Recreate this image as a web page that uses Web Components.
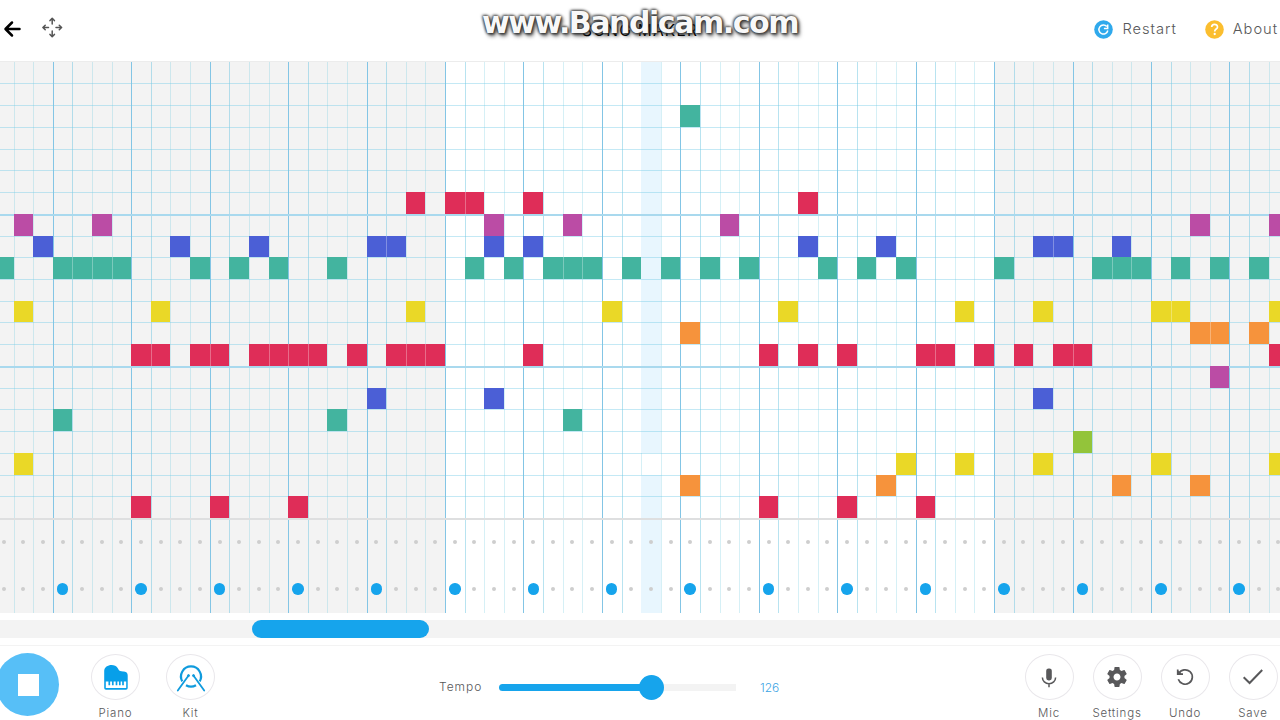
<!DOCTYPE html>
<html lang="en">
<head>
<meta charset="utf-8">
<title>Song Maker</title>
<style>
  body {
    margin: 0;
    width: 1280px;
    height: 720px;
    overflow: hidden;
    background: #fff;
    color: #58585a;
    font-family: Inter, "Open Sans", sans-serif;
    font-weight: 350;
  }
</style>
</head>
<body>
<song-maker></song-maker>

<script>
const define = (name, html, setup) => {
  const template = document.createElement('template');
  template.innerHTML = html;

  customElements.define(name, class extends HTMLElement {
    constructor() {
      super();
      this._shadowRoot = this.attachShadow({ mode: 'open' });
      this._shadowRoot.appendChild(template.content.cloneNode(true));
    }

    connectedCallback() {
      if (setup && !this.ready) {
        this.ready = true;
        setup(this, this._shadowRoot);
      }
    }
  });
};

// icon + label in the header
define('header-link', `
  <style>
    :host { display: flex; align-items: center; gap: 9px; font-size: 14.7px; letter-spacing: .95px; white-space: nowrap; }
    ::slotted(svg) { display: block; flex: none; }
    span { margin-top: -1px; }
  </style>
  <slot name="icon"></slot>
  <span><slot></slot></span>
`);

define('app-header', `
  <style>
    :host { display: flex; position: relative; height: 61px; width: 1280px; overflow: hidden; }
    .left { display: flex; gap: 20px; padding: 17px 0 0 3px; }
    .right { display: flex; gap: 28px; margin-left: auto; margin-right: 2px; height: 58px; }
    .title {
      position: absolute; left: 582px; top: 20px;
      font-size: 15.5px; font-weight: 400; line-height: 22px; letter-spacing: 1.25px; color: #000; white-space: nowrap;
    }
    .watermark {
      position: absolute; left: 482px; top: 5px; white-space: nowrap;
      font: bold 30px/36px "DejaVu Sans", sans-serif; letter-spacing: -1.45px; color: rgba(255, 255, 255, .97);
      text-shadow: 0 0 3px #333, 1px 1px 3px #333, 2px 3px 4px rgba(0,0,0,.6), -1px -1px 3px rgba(0,0,0,.5);
    }
    svg { display: block; }
  </style>
  <div class="left">
    <svg width="19" height="24" viewBox="0 0 19 24" fill="none" stroke="#000" stroke-width="2.5" stroke-linecap="round" stroke-linejoin="round">
      <path d="M16.5 12H3M9 5.5L2.5 12L9 18.5"/>
    </svg>
    <svg width="22" height="22" viewBox="0 0 22 22" fill="none" stroke="#555" stroke-width="1.5" stroke-linecap="round" stroke-linejoin="round">
      <path d="M10.2 7V1.6M8 3.6L10.2 1.2L12.4 3.6M10.2 14V19.6M8 17.4L10.2 19.8L12.4 17.4M6.5 10.5H1M3.2 8.3L.9 10.5L3.2 12.7M14 10.5H19.6M17.3 8.3L19.6 10.5L17.3 12.7"/>
    </svg>
  </div>
  <div class="right">
    <header-link>
      <svg slot="icon" width="19" height="19" viewBox="0 0 19 19">
        <circle cx="9.5" cy="9.5" r="9.3" fill="#2fa9ec"/>
        <path d="M12.8 6.6A4.5 4.5 0 1 0 13.8 10.5M13.7 4.6V8.4H9.9" fill="none" stroke="#fff" stroke-width="1.5"/>
      </svg>Restart
    </header-link>
    <header-link>
      <svg slot="icon" width="19" height="19" viewBox="0 0 19 19">
        <circle cx="9.5" cy="9.5" r="9.3" fill="#fbbe2f"/>
        <path d="M6.7 7.1C6.7 3.4 12.5 3.4 12.5 7C12.5 9.1 9.7 9 9.7 11.4" fill="none" stroke="#fff" stroke-width="1.7"/>
        <circle cx="9.7" cy="14" r="1.15" fill="#fff"/>
      </svg>About
    </header-link>
  </div>
  <div class="title">SONG MAKER</div>
  <div class="watermark">www.Bandicam.com</div>
`);

// each row: [row index, colour, columns]
const NOTES = [
  [2, '#43b49f', [35]],
  [6, '#df2d58', [21, 23, 24, 27, 41]],
  [7, '#bb4ca5', [1, 5, 25, 29, 37, 61, 65]],
  [8, '#4b5fd6', [2, 9, 13, 19, 20, 25, 27, 41, 45, 53, 54, 57]],
  [9, '#43b49f', [0, 3, 4, 5, 6, 10, 12, 14, 17, 24, 26, 28, 29, 30, 32, 34, 36, 38, 42, 44, 46, 51, 56, 57, 58, 60, 62, 64]],
  [11, '#ead827', [1, 8, 21, 31, 40, 49, 53, 59, 60, 65]],
  [12, '#f6933c', [35, 61, 62, 64]],
  [13, '#df2d58', [7, 8, 10, 11, 13, 14, 15, 16, 18, 20, 21, 22, 27, 39, 41, 43, 47, 48, 50, 52, 54, 55, 65]],
  [14, '#bb4ca5', [62]],
  [15, '#4b5fd6', [19, 25, 53]],
  [16, '#43b49f', [3, 17, 29]],
  [17, '#93c43a', [55]],
  [18, '#ead827', [1, 46, 49, 53, 59, 65]],
  [19, '#f6933c', [35, 45, 57, 61]],
  [20, '#df2d58', [7, 11, 15, 39, 43, 47]]
];
const COLS = 66;
const ROWS = 21;
const PLAYHEAD = 33;

define('song-grid', `
  <style>
    :host { display: block; width: 1280px; height: 551.5px; overflow: hidden; border-top: 1px solid #ececec; box-sizing: border-box; }
    .grid {
      display: grid; margin-left: -6px; width: max-content;
      grid-template-columns: repeat(66, 19.62px);
      grid-template-rows: 21.4px repeat(20, 21.74px) 47px 47.5px;
    }
    .shade { background: #f3f3f3; }
    .col { border-left: 1px solid rgba(120, 205, 225, .3); }
    .col.beat { border-left: 1px solid #83c5e5; box-shadow: 1px 0 rgba(116, 191, 227, .3); }
    .row { border-top: 1px solid rgba(115, 203, 232, .42); }
    .row.octave { border-top: 2px solid #a9d9ee; }
    .divider { border-top: 2px solid #dedfe0; }
    .head { background: #e8f6fe; }
    .note.joined { border-left: 1px solid rgba(255, 255, 255, .3); }
    .dot { align-self: center; justify-self: center; width: 4px; height: 4px; border-radius: 50%; background: #cecece; }
    .dot.hit { width: 11.5px; height: 11.5px; background: #16a4ec; }
  </style>
  <div class="grid"></div>
`, (host, root) => {
  const grid = root.querySelector('.grid');
  const add = (cls, row, col, bg) => {
    const el = document.createElement('div');
    el.className = cls;
    el.style.gridArea = row + ' / ' + col;
    if (bg) el.style.background = bg;
    grid.appendChild(el);
    return el;
  };

  add('shade', '1', '1 / -1 / 24');
  add('shade', '1', '52 / -1 / 67');
  for (let c = 0; c < COLS; c += 1) {
    add((c + 1) % 4 === 0 ? 'col beat' : 'col', 1, (c + 1) + ' / -1 / ' + (c + 2));
  }
  // the playhead leaves one row unlit
  add('head', 1, (PLAYHEAD + 1) + ' / 19 / ' + (PLAYHEAD + 2));
  add('head', 20, (PLAYHEAD + 1) + ' / -1 / ' + (PLAYHEAD + 2));
  for (let r = 1; r < ROWS; r += 1) {
    add(r % 7 === 0 ? 'row octave' : 'row', r + 1, '1 / ' + (r + 2) + ' / -1');
  }
  add('divider', 22, '1 / 23 / -1');

  NOTES.forEach(([row, color, cols]) => {
    cols.forEach((c) => {
      add(cols.includes(c - 1) ? 'note joined' : 'note', row + 1, c + 1, color);
    });
  });

  for (let c = 0; c < COLS; c += 1) {
    add('dot', 22, c + 1);
    add((c + 1) % 4 === 0 ? 'dot hit' : 'dot', 23, c + 1);
  }
});

define('scroll-strip', `
  <style>
    :host { display: block; height: 18px; margin-top: 7.5px; background: #f3f3f3; }
    div { width: 177px; height: 18px; margin-left: 252px; border-radius: 9px; background: #16a4ec; }
  </style>
  <div></div>
`);

define('tool-button', `
  <style>
    :host { display: flex; flex-direction: column; align-items: center; width: 68px; font-size: 11.5px; letter-spacing: .8px; line-height: 14px; }
    .ring {
      display: flex; align-items: center; justify-content: center; box-sizing: border-box;
      width: 49px; height: 49px; border: 1px solid #e9e7eb; border-radius: 50%; margin-bottom: 6px;
    }
    ::slotted(svg) { display: block; }
  </style>
  <div class="ring"><slot name="icon"></slot></div>
  <span><slot></slot></span>
`);

define('tempo-slider', `
  <style>
    :host { display: flex; align-items: center; height: 26px; font-size: 12px; }
    .label { width: 60px; letter-spacing: .95px; margin-top: -1px; }
    .track { display: flex; align-items: center; width: 237px; height: 7px; border-radius: 3.5px 0 0 3.5px; background: #f3f3f3; }
    .fill { width: 141px; height: 7px; border-radius: 3.5px 0 0 3.5px; background: #16a4ec; }
    .knob { width: 25px; height: 25px; margin-left: -1px; border-radius: 50%; background: #16a4ec; flex: none; }
    .value { margin-left: 24px; color: #3ba4e4; }
  </style>
  <span class="label">Tempo</span>
  <div class="track"><div class="fill"></div><div class="knob"></div></div>
  <span class="value">126</span>
`);

define('app-footer', `
  <style>
    :host { display: flex; width: 1280px; height: 75px; margin-top: 7px; border-top: 1px solid #f3f3f3; box-sizing: border-box; }
    .stop { display: flex; align-items: center; justify-content: center; flex: none; width: 63px; height: 63px; margin: 7.4px 0 0 -4px; border-radius: 50%; background: #57bff7; box-sizing: border-box; padding-left: 2px; }
    .stop i { width: 21px; height: 22px; background: #fff; }
    .tools { display: flex; flex: none; padding-top: 8px; }
    .voices { gap: 7px; margin-left: 22.5px; }
    tempo-slider { margin: 28px 0 0 214.5px; }
    .actions { margin-left: auto; margin-right: -7px; }
  </style>
  <div class="stop"><i></i></div>
  <div class="tools voices">
    <tool-button>
      <svg slot="icon" width="26" height="28" viewBox="0 0 26 28">
        <path d="M1.2 25V8C1.2 1.2 12 -.2 14.8 5.2C16.3 8.6 18 8.2 21 8.4C23.8 8.7 24.7 10.2 24.7 12.5V25Q24.7 26.7 23 26.7H3Q1.2 26.7 1.2 25Z" fill="#079fe9"/>
        <path d="M2.8 18.5H23.2V25H2.8Z" fill="#fff"/>
        <path d="M6.3 18V22.3M9.8 18V22.3M13.5 18V22.3M16.8 18V22.3M20 18V22.3" stroke="#079fe9" stroke-width="1.7"/>
      </svg>Piano
    </tool-button>
    <tool-button>
      <svg slot="icon" width="30" height="30" viewBox="0 0 30 30" fill="none" stroke="#109bdd">
        <path d="M6.3 19.4A10 10 0 1 1 23.7 19.4M10 23.2Q15 26.2 20 23.2" stroke-width="2.2"/>
        <path d="M1.8 28.5L12.4 13.7M28.2 28.5L17.6 13.7" stroke-width="1.8" stroke-linecap="round"/>
        <circle cx="12.5" cy="13.6" r="1" fill="#109bdd"/><circle cx="17.5" cy="13.6" r="1" fill="#109bdd"/>
      </svg>Kit
    </tool-button>
  </div>
  <tempo-slider></tempo-slider>
  <div class="tools actions">
    <tool-button>
      <svg slot="icon" width="24" height="24" viewBox="0 0 24 24" fill="none" stroke="#58585a">
        <rect x="9.2" y="3.4" width="5.6" height="12" rx="2.4" fill="#58585a" stroke="none"/>
        <path d="M5.4 12.4A6.6 6.3 0 0 0 18.6 12.4M12 18.5V22.2" stroke-width="1.5"/>
      </svg>Mic
    </tool-button>
    <tool-button>
      <svg slot="icon" width="24" height="24" viewBox="0 0 24 24">
        <path fill="#58585a" d="M19.43 12.98c.04-.32.07-.64.07-.98s-.03-.66-.07-.98l2.11-1.65c.19-.15.24-.42.12-.64l-2-3.46c-.12-.22-.39-.3-.61-.22l-2.49 1c-.52-.4-1.08-.73-1.69-.98l-.38-2.65C14.46 2.18 14.25 2 14 2h-4c-.25 0-.46.18-.49.42l-.38 2.65c-.61.25-1.17.59-1.69.98l-2.49-1c-.23-.09-.49 0-.61.22l-2 3.46c-.13.22-.07.49.12.64l2.11 1.65c-.04.32-.07.65-.07.98s.03.66.07.98l-2.11 1.65c-.19.15-.24.42-.12.64l2 3.46c.12.22.39.3.61.22l2.49-1c.52.4 1.08.73 1.69.98l.38 2.65c.03.24.24.42.49.42h4c.25 0 .46-.18.49-.42l.38-2.65c.61-.25 1.17-.59 1.69-.98l2.49 1c.23.09.49 0 .61-.22l2-3.46c.12-.22.07-.49-.12-.64l-2.11-1.65zM12 15.5c-1.93 0-3.5-1.57-3.5-3.5s1.57-3.5 3.5-3.5 3.5 1.57 3.5 3.5-1.57 3.5-3.5 3.5z"/>
      </svg>Settings
    </tool-button>
    <tool-button>
      <svg slot="icon" width="24" height="24" viewBox="0 0 24 24" fill="none" stroke="#58585a" stroke-width="1.7">
        <path d="M5.8 8.6A7.2 7.2 0 1 1 5.3 14.3M4.7 4.5V9.2H10"/>
        <path d="M4.7 5V9.2H9Z" fill="#58585a" stroke="none"/>
      </svg>Undo
    </tool-button>
    <tool-button>
      <svg slot="icon" width="24" height="24" viewBox="0 0 24 24" fill="none" stroke="#58585a" stroke-width="2">
        <path d="M2.7 12.2L8.6 18L21.2 5"/>
      </svg>Save
    </tool-button>
  </div>
`);

define('song-maker', `
  <style>
    :host { display: flex; flex-direction: column; width: 1280px; height: 720px; overflow: hidden; }
    app-header, song-grid, scroll-strip, app-footer { flex: none; }
  </style>
  <app-header></app-header>
  <song-grid></song-grid>
  <scroll-strip></scroll-strip>
  <app-footer></app-footer>
`);
</script>
</body>
</html>
